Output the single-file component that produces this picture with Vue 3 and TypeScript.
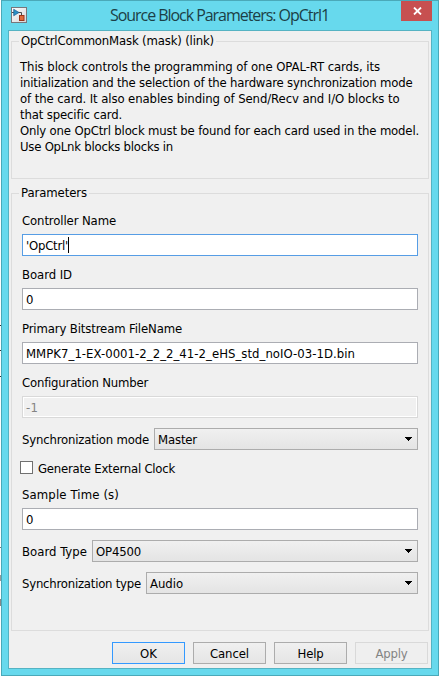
<script setup lang="ts">
import type { Directive } from 'vue'

interface Line { text: string; width: number }
interface Field extends Line { kind: 'input' | 'select' | 'check'; value?: string; valueWidth?: number; state?: string }

// Spreads the letters so that a text run takes exactly the given advance width.
const vFit: Directive<HTMLElement, number> = {
  mounted(el, binding) {
    const natural = el.getBoundingClientRect().width
    const count = (el.textContent ?? '').length
    if (count > 0) el.style.letterSpacing = `${(binding.value - natural) / count}px`
  },
}

const description: Line[] = [
  { text: 'This block controls the programming of one OPAL-RT cards, its', width: 360 },
  { text: 'initialization and the selection of the hardware synchronization mode', width: 392.5 },
  { text: 'of the card. It also enables binding of Send/Recv and I/O blocks to', width: 379.5 },
  { text: 'that specific card.', width: 102 },
  { text: 'Only one OpCtrl block must be found for each card used in the model.', width: 399 },
  { text: 'Use OpLnk blocks blocks in', width: 153 },
]

const fields: Field[] = [
  { kind: 'input', text: 'Controller Name', width: 94, value: "'OpCtrl'", valueWidth: 42, state: 'focused' },
  { kind: 'input', text: 'Board ID', width: 50, value: '0', valueWidth: 7 },
  { kind: 'input', text: 'Primary Bitstream FileName', width: 160, value: 'MMPK7_1-EX-0001-2_2_2_41-2_eHS_std_noIO-03-1D.bin', valueWidth: 329 },
  { kind: 'input', text: 'Configuration Number', width: 126, value: '-1', valueWidth: 12, state: 'disabled' },
  { kind: 'select', text: 'Synchronization mode', width: 127, value: 'Master', valueWidth: 39 },
  { kind: 'check', text: 'Generate External Clock', width: 137 },
  { kind: 'input', text: 'Sample Time (s)', width: 97, value: '0', valueWidth: 7 },
  { kind: 'select', text: 'Board Type', width: 65, value: 'OP4500', valueWidth: 45 },
  { kind: 'select', text: 'Synchronization type', width: 119, value: 'Audio', valueWidth: 33 },
]

const buttons = [
  { text: 'OK', width: 17, state: 'default' },
  { text: 'Cancel', width: 39, state: '' },
  { text: 'Help', width: 26, state: '' },
  { text: 'Apply', width: 32, state: 'disabled' },
]
</script>

<template>
  <div class="desktop">
    <div class="window">
      <header class="titlebar">
        <svg class="app-icon" width="16" height="16" viewBox="0 0 16 16">
          <defs>
            <linearGradient id="tile" x1="0" y1="0" x2="1" y2="1">
              <stop offset="0" stop-color="#fff" /><stop offset="1" stop-color="#d5d5d8" />
            </linearGradient>
          </defs>
          <rect x=".5" y=".5" width="15" height="15" fill="url(#tile)" stroke="#77777c" />
          <path d="M1 5.5H3M7 5.5H10.5V9" fill="none" stroke="#4a4a4a" />
          <path d="M2.7 2.2L8 5.5L2.7 8.8Z" fill="#2b8fc4" stroke="#1f5f94" stroke-width=".7" />
          <rect x="8.5" y="8.5" width="4.5" height="5" fill="#e06a38" stroke="#9c3518" />
        </svg>
        <h1 class="title"><span v-fit="219">Source Block Parameters: OpCtrl1</span></h1>
        <button class="close" aria-label="Close">
          <svg width="9" height="8" viewBox="0 0 9 8"><path d="M1 .5L8 7.5M8 .5L1 7.5" stroke="#fff" stroke-width="1.8" /></svg>
        </button>
      </header>

      <main class="content">
        <section class="group about">
          <div class="legend"><span v-fit="193">OpCtrlCommonMask (mask) (link)</span></div>
          <div v-for="line in description" :key="line.text" class="line"><span v-fit="line.width">{{ line.text }}</span></div>
        </section>

        <section class="group params">
          <div class="legend"><span v-fit="66">Parameters</span></div>
          <div v-for="f in fields" :key="f.text" :class="['field', f.kind]">
            <i v-if="f.kind === 'check'" class="box"></i>
            <div class="label"><span v-fit="f.width">{{ f.text }}</span></div>
            <div v-if="f.kind !== 'check'" :class="['control', f.state]">
              <span v-fit="f.valueWidth ?? 0">{{ f.value }}</span>
              <i v-if="f.state === 'focused'" class="caret"></i>
              <svg v-if="f.kind === 'select'" class="arrow" width="7" height="4" viewBox="0 0 7 4" shape-rendering="crispEdges">
                <path d="M0 0H7V1H6V2H5V3H4V4H3V3H2V2H1V1H0Z" />
              </svg>
            </div>
          </div>
        </section>

        <footer class="buttons">
          <button v-for="b in buttons" :key="b.text" :class="['button', b.state]"><span v-fit="b.width">{{ b.text }}</span></button>
        </footer>
      </main>
    </div>
  </div>
</template>

<style>
body { margin: 0; background: #fff; }
</style>

<style scoped>
* { box-sizing: border-box; }
.desktop {
  width: 440px; height: 676px; padding: 0 1px; overflow: hidden;
  background:
    linear-gradient(#333, #333) 0 325px / 1px 1px no-repeat,
    linear-gradient(#333, #333) 0 350px / 1px 1px no-repeat,
    linear-gradient(#333, #333) 0 376px / 1px 1px no-repeat,
    linear-gradient(#777, #777) 0 547px / 1px 1px no-repeat,
    linear-gradient(#999, #999) 0 575px / 1px 6px no-repeat,
    linear-gradient(#888, #888) 0 599px / 1px 7px no-repeat,
    #fff;
  font: 13px/16px "DejaVu Sans Condensed", "DejaVu Sans", sans-serif;
  font-stretch: condensed;
  color: #000;
}
span { white-space: pre; }
.window {
  width: 438px; height: 676px; padding: 0 6px 6px; display: flex; flex-direction: column;
  border: 1px solid #4aa9b9; background: #67d9ed;
}
.titlebar { display: flex; height: 29px; flex: none; padding-left: 3px; }
.app-icon { margin-top: 6px; flex: none; }
.title {
  margin: 3px 0 0; padding-left: 83px; flex: 1;
  font: 400 16px/23px "Open Sans", sans-serif; color: #1c3f46;
}
.close {
  width: 31px; height: 20px; padding: 0 0 0 1px; border: 0; background: #c75050;
  display: flex; align-items: center; justify-content: center;
}
.content {
  flex: 1; border: 1px solid #55b3c3; background: #f0f0f0;
  padding: 10px 2px 4px; display: flex; flex-direction: column;
}
.group { border: 1px solid #dcdcdc; width: 418px; }
.legend { width: max-content; height: 16px; margin: -9px 0 0 7px; padding: 0 2px; background: #f0f0f0; }
.about { height: 138px; }
.about .legend { margin-bottom: 10px; }
.line { height: 16px; padding-left: 8px; }
.params { height: 438px; margin-top: 14px; }
.params .legend { margin-bottom: 12px; }
.field { padding: 0 10px; }
.label { height: 16px; }
.input .label { margin-bottom: 5px; }
.input { margin-bottom: 11px; }
.control {
  height: 22px; display: flex; align-items: center; padding: 0 5px 0 3px;
  border: 1px solid #abadb3; background: #fff;
}
.control span { padding-top: 2px; }
.focused { border-color: #569de5; }
.caret { width: 1px; height: 16px; background: #000; }
.input .disabled { border-color: #d9d9d9; background: #f0f0f0; box-shadow: inset 0 0 0 1px #fff; color: #838383; }
.select { display: flex; align-items: center; height: 22px; margin-bottom: 10px; gap: 5px; }
.select .label { height: 18px; padding-top: 2px; }
.select .control {
  flex: 1; border-color: #acacac; background: linear-gradient(#f0f0f0, #e4e4e4); justify-content: space-between;
}
.input + .select { margin-top: -1px; }
.check { display: flex; align-items: center; height: 15px; gap: 5px; padding-left: 8px; margin-bottom: 12px; }
.check .label { height: 19px; padding-top: 3px; }
.box { width: 13px; height: 13px; border: 1px solid #707070; background: #fff; }
.buttons { display: flex; gap: 8px; justify-content: flex-end; margin-top: 11px; width: 417px; }
.button {
  width: 73px; height: 22px; padding: 2px 0 0; border: 1px solid #acacac;
  background: linear-gradient(#f0f0f0, #e5e5e5); font: inherit; color: #000;
}
.button.default { border-color: #3399ff; }
.button.disabled { border-color: #d9d9d9; background: #efefef; color: #838383; }
</style>
